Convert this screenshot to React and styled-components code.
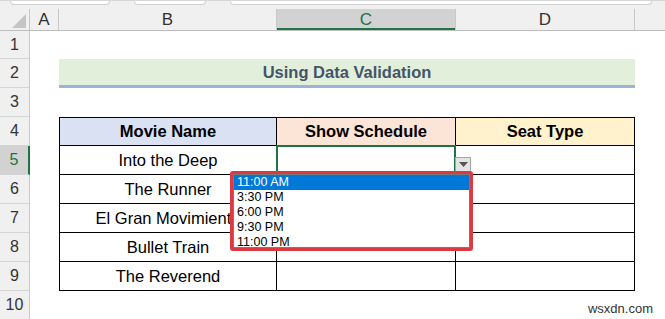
import React from "react";
import styled, { createGlobalStyle } from "styled-components";

const GlobalStyle = createGlobalStyle`
  body {
    margin: 0;
    background: #ffffff;
    font-family: "Liberation Sans", Arial, sans-serif;
  }
`;

const COLS = "30px 29px 218px 179px 179px 1fr";

const movies = [
  "Into the Deep",
  "The Runner",
  "El Gran Movimiento",
  "Bullet Train",
  "The Reverend",
];

const times = ["11:00 AM", "3:30 PM", "6:00 PM", "9:30 PM", "11:00 PM"];

const App = () => {
  return (
    <>
      <GlobalStyle />
      <Sheet>
        <TopStrip>
          <RibbonBox $w={98} />
          <RibbonBox $w={70} />
          <RibbonBox $w={420} />
        </TopStrip>
        <HeaderRow>
          <Corner>
            <CornerTriangle />
          </Corner>
          <ColHead>A</ColHead>
          <ColHead>B</ColHead>
          <ColHead $active>C</ColHead>
          <ColHead>D</ColHead>
          <ColHead $last />
        </HeaderRow>

        <Row $h={28}>
          <RowHead>1</RowHead>
        </Row>
        <Row>
          <RowHead>2</RowHead>
          <Blank />
          <Title>Using Data Validation</Title>
        </Row>
        <Row>
          <RowHead>3</RowHead>
        </Row>
        <Row>
          <RowHead>4</RowHead>
          <Blank />
          <Cell $bg="#d9e1f2" $bold $top $left>
            Movie Name
          </Cell>
          <Cell $bg="#fce4d6" $bold $top>
            Show Schedule
          </Cell>
          <Cell $bg="#fff2cc" $bold $top>
            Seat Type
          </Cell>
        </Row>
        {movies.map((m, i) => (
          <Row key={m}>
            <RowHead $active={i === 0}>{i + 5}</RowHead>
            <Blank />
            <Cell $left>{m}</Cell>
            <Cell>
              {i === 0 && <Selected />}
            </Cell>
            <Cell />
          </Row>
        ))}
        <Row>
          <RowHead>10</RowHead>
        </Row>

        <ArrowButton>
          <svg width="9" height="5" viewBox="0 0 9 5">
            <path d="M0 0 L9 0 L4.5 5 Z" fill="#555" />
          </svg>
        </ArrowButton>

        <DropFrame>
          <DropList>
            {times.map((t, i) => (
              <DropItem key={t} $sel={i === 0}>
                {t}
              </DropItem>
            ))}
          </DropList>
        </DropFrame>

        <Watermark>wsxdn.com</Watermark>
      </Sheet>
    </>
  );
};

const Sheet = styled.div`
  position: relative;
  width: 665px;
  height: 319px;
  overflow: hidden;
  background: #ffffff;
`;

const TopStrip = styled.div`
  display: flex;
  gap: 24px;
  height: 8px;
  padding-left: 10px;
  background: #f0f0f0;
  border-top: 1px solid #d6d6d6;
`;

const RibbonBox = styled.div`
  width: ${(p) => p.$w}px;
  height: 3px;
  background: #ffffff;
  border: 1px solid #d0d0d0;
  border-top: none;
  border-radius: 0 0 4px 4px;
`;

const HeaderRow = styled.div`
  display: grid;
  grid-template-columns: ${COLS};
  height: 21px;
  background: #f0f0f0;
  border-bottom: 1px solid #bdbdbd;
`;

const Corner = styled.div`
  position: relative;
  border-right: 1px solid #c8c8c8;
`;

const CornerTriangle = styled.div`
  position: absolute;
  right: 3px;
  bottom: 2px;
  width: 0;
  height: 0;
  border-left: 14px solid transparent;
  border-bottom: 14px solid #c4c4c4;
`;

const ColHead = styled.div`
  display: flex;
  align-items: center;
  justify-content: center;
  font-size: 17px;
  color: ${(p) => (p.$active ? "#217346" : "#333333")};
  background: ${(p) => (p.$active ? "#d2d2d2" : "transparent")};
  border-right: ${(p) => (p.$last ? "none" : "1px solid #c8c8c8")};
  box-shadow: ${(p) => (p.$active ? "inset 0 -2px 0 #217346" : "none")};
  box-sizing: border-box;
`;

const Row = styled.div`
  display: grid;
  grid-template-columns: ${COLS};
  height: ${(p) => p.$h || 29}px;
`;

const RowHead = styled.div`
  display: flex;
  align-items: center;
  justify-content: center;
  font-size: 16px;
  color: ${(p) => (p.$active ? "#217346" : "#333333")};
  background: ${(p) => (p.$active ? "#d2d2d2" : "#f0f0f0")};
  border-right: ${(p) => (p.$active ? "2px solid #217346" : "1px solid #c8c8c8")};
  border-bottom: 1px solid #d4d4d4;
  box-sizing: border-box;
`;

const Blank = styled.div``;

const Title = styled.div`
  grid-column: 3 / 6;
  display: flex;
  align-items: center;
  justify-content: center;
  background: #e2efda;
  border-bottom: 3px solid #9fb2d4;
  font-size: 16.5px;
  font-weight: bold;
  color: #44546a;
  box-sizing: border-box;
`;

const Cell = styled.div`
  position: relative;
  display: flex;
  align-items: center;
  justify-content: center;
  white-space: nowrap;
  font-size: 16.5px;
  font-weight: ${(p) => (p.$bold ? "bold" : "normal")};
  color: #000000;
  background: ${(p) => p.$bg || "transparent"};
  border-right: 1px solid #000000;
  border-bottom: 1px solid #000000;
  border-top: ${(p) => (p.$top ? "1px solid #000000" : "none")};
  border-left: ${(p) => (p.$left ? "1px solid #000000" : "none")};
  box-sizing: border-box;
`;

const Selected = styled.div`
  position: absolute;
  left: -1px;
  top: -1px;
  right: -1px;
  bottom: -1px;
  border: 2px solid #217346;
`;

const ArrowButton = styled.div`
  position: absolute;
  left: 455px;
  top: 157px;
  width: 16px;
  height: 15px;
  display: flex;
  align-items: center;
  justify-content: center;
  background: #e3e3e3;
  border: 1px solid #a6a6a6;
  box-sizing: border-box;
`;

const DropFrame = styled.div`
  position: absolute;
  left: 230px;
  top: 171px;
  width: 243px;
  height: 80px;
  border: 3px solid #dc3a42;
  border-radius: 3px;
  background: #ffffff;
  box-sizing: border-box;
`;

const DropList = styled.div`
  display: flex;
  flex-direction: column;
  height: 100%;
  border: 1px solid #7a7a7a;
  box-sizing: border-box;
`;

const DropItem = styled.div`
  height: 15px;
  line-height: 15px;
  padding-left: 3px;
  font-size: 12.5px;
  color: ${(p) => (p.$sel ? "#ffffff" : "#000000")};
  background: ${(p) => (p.$sel ? "#0078d7" : "transparent")};
`;

const Watermark = styled.div`
  position: absolute;
  right: 12px;
  bottom: 3px;
  font-size: 13px;
  color: #333333;
`;

export default App;
